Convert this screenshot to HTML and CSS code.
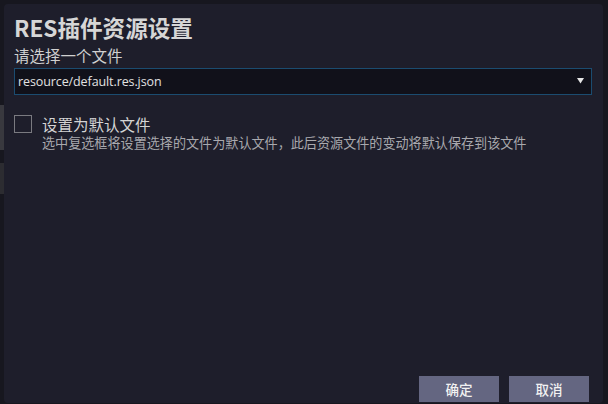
FILE: index.html
```html
<!DOCTYPE html>
<html lang="zh-CN">
<head>
<meta charset="utf-8">
<link rel="stylesheet" href="styles.css">
</head>
<body>
<div class="bg-band band-a"></div>
<div class="bg-band band-b"></div>
<div class="dialog">
  <h1 class="title">RES插件资源设置</h1>
  <div class="field-label">请选择一个文件</div>
  <div class="select">
    <span class="select-value">resource/default.res.json</span>
    <svg class="select-arrow" width="7" height="6" viewBox="0 0 7 6"><path d="M0 0H7L3.5 5.5Z" fill="#e6e6e6"/></svg>
  </div>
  <div class="check-row">
    <span class="checkbox"></span>
    <div class="check-text">
      <div class="check-label">设置为默认文件</div>
      <div class="check-desc">选中复选框将设置选择的文件为默认文件，此后资源文件的变动将默认保存到该文件</div>
    </div>
  </div>
  <div class="spacer"></div>
  <div class="actions">
    <button class="btn">确定</button>
    <button class="btn">取消</button>
  </div>
</div>
</body>
</html>
```

FILE: styles.css
```css
html, body {
  margin: 0;
  padding: 0;
  height: 100%;
  overflow: hidden;
}
body {
  background: #17171f;
  font-family: "Open Sans", "Noto Sans CJK SC", sans-serif;
  position: relative;
}
.bg-band {
  position: absolute;
  left: 0;
  width: 4px;
}
.band-a { top: 105px; height: 45px; background: #38383e; }
.band-b { top: 163px; height: 31px; background: #2c2c31; }

.dialog {
  position: relative;
  margin: 4px 5px 0 4px;
  height: 399px;
  box-sizing: border-box;
  background: #1e1e2b;
  border-radius: 4px;
  padding: 0 11px 1px 10px;
  display: flex;
  flex-direction: column;
}
.title {
  margin: 0;
  padding-top: 10px;
  font-family: "Noto Sans CJK SC", sans-serif;
  font-size: 22.6px;
  font-weight: 700;
  line-height: 28px;
  color: #d6d6d6;
}
.field-label {
  margin-top: 2px;
  font-family: "Noto Sans CJK SC", sans-serif;
  font-size: 15.5px;
  line-height: 22px;
  color: #d0d0d0;
}
.select {
  margin-top: 2px;
  height: 27px;
  box-sizing: border-box;
  border: 1px solid #1b4c70;
  background: #11111a;
  display: flex;
  align-items: center;
  justify-content: space-between;
  padding: 0 7px 0 3px;
}
.select-value {
  font-family: "Open Sans", sans-serif;
  font-size: 12.5px;
  color: #e2e2e2;
  letter-spacing: -0.1px;
}
.select-arrow {
  display: block;
  margin-top: -2px;
}
.check-row {
  margin-top: 20px;
  display: flex;
  align-items: flex-start;
}
.checkbox {
  width: 18px;
  height: 18px;
  box-sizing: border-box;
  border: 1px solid #7a7a80;
  flex: none;
}
.check-text {
  margin-left: 10px;
  margin-top: -2px;
}
.check-label {
  font-family: "Noto Sans CJK SC", sans-serif;
  font-size: 15.5px;
  line-height: 22px;
  color: #d4d4d4;
}
.check-desc {
  margin-top: -1px;
  font-family: "Noto Sans CJK SC", sans-serif;
  font-size: 13.1px;
  line-height: 18px;
  color: #a9a9ae;
}
.spacer { flex: 1; }
.actions {
  display: flex;
  justify-content: flex-end;
  gap: 10px;
  padding-right: 3px;
}
.btn {
  width: 80px;
  height: 26px;
  border: none;
  border-radius: 0;
  background: #646681;
  color: #f2f2f2;
  font-family: "Noto Sans CJK SC", sans-serif;
  font-size: 13.5px;
  font-weight: 500;
  padding: 0;
  line-height: 26px;
}
```
